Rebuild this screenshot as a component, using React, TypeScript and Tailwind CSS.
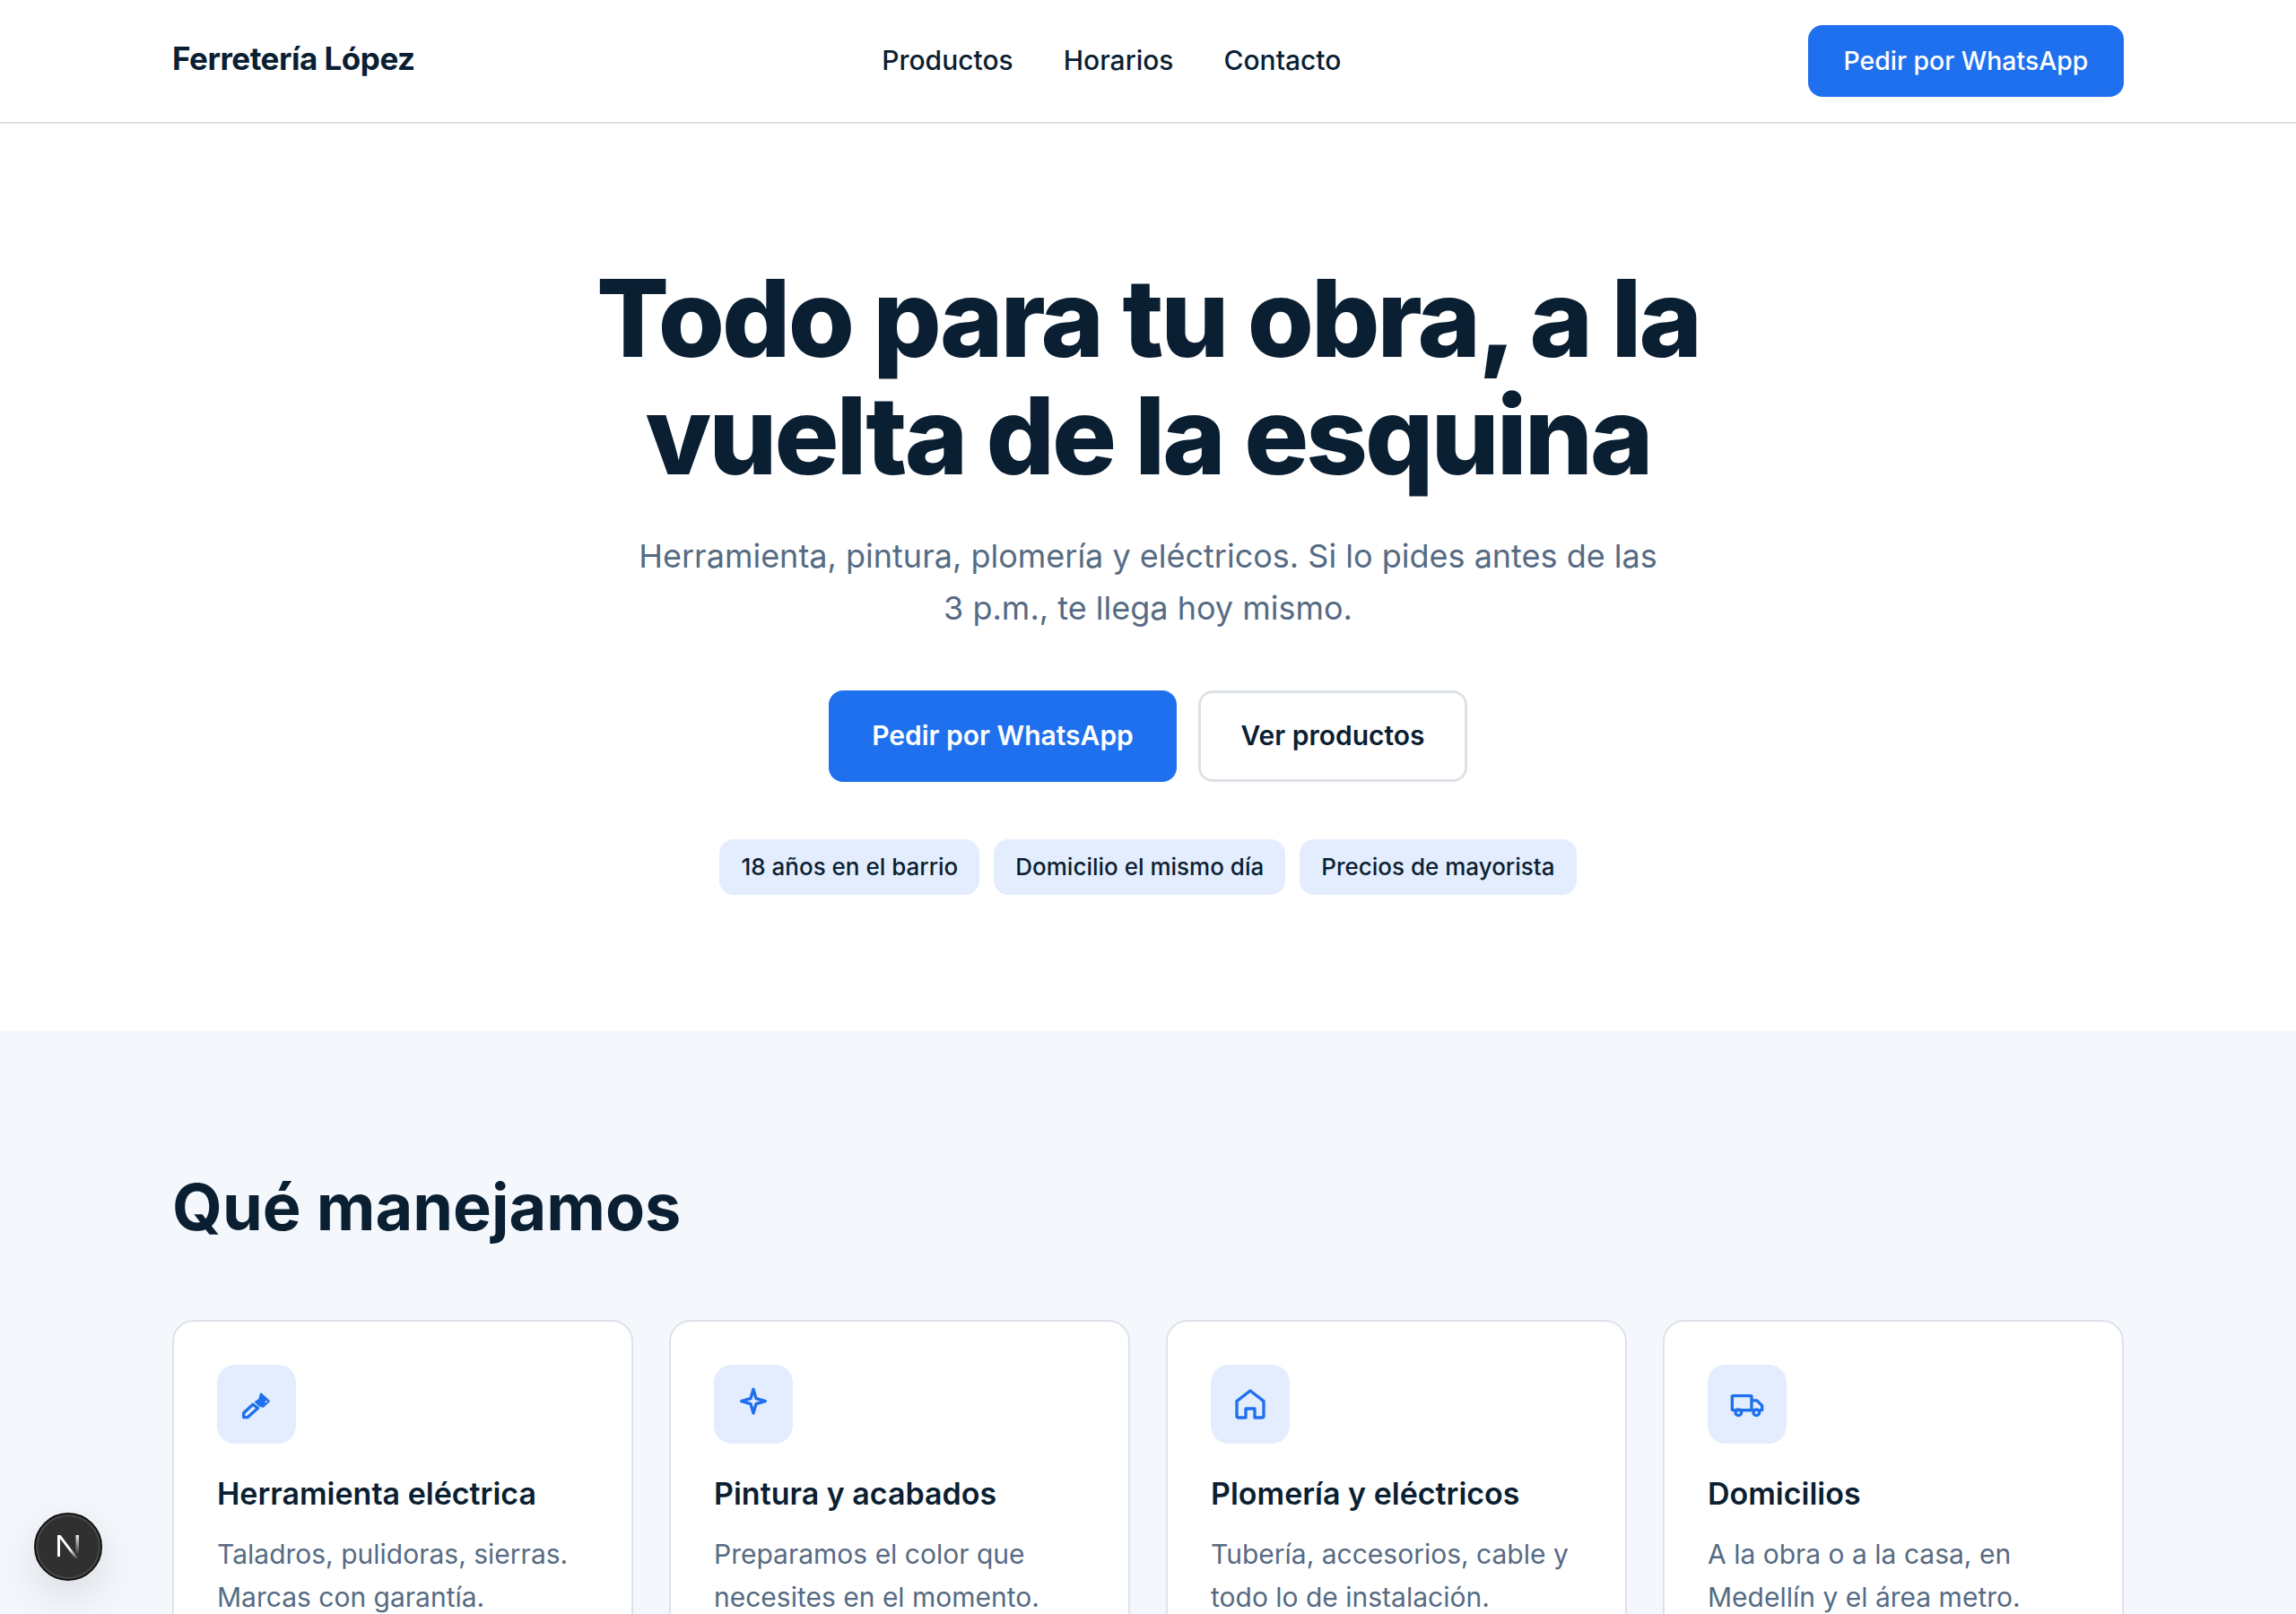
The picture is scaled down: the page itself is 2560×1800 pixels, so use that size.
import type { ReactNode } from 'react'

function Icon({ children }: { children: ReactNode }) {
  return (
    <svg viewBox="0 0 24 24" className="w-[40px] h-[40px] text-[#1f70ee]" fill="none" stroke="currentColor" strokeWidth={2} strokeLinecap="round" strokeLinejoin="round">
      {children}
    </svg>
  )
}

const cards = [
  {
    icon: (
      <Icon>
        <path d="M3.4 17.8l6.2-5.6 3.4 2.4-7 6.2H3.4z" />
        <path d="M11.5 10.5L14 9l1-3.8 5.2 4.8-3.8 3.6-2.4-.8z" fill="currentColor" strokeWidth={1.4} />
        <path d="M18 10.6l.8-.5" stroke="#e3edfd" strokeWidth={0.8} />
      </Icon>
    ),
    title: 'Herramienta eléctrica',
    text: ['Taladros, pulidoras, sierras.', 'Marcas con garantía.'],
  },
  {
    icon: (
      <Icon>
        <path d="M12 2l1.8 6.2L20 10l-6.2 1.8L12 18l-1.8-6.2L4 10l6.2-1.8z" />
      </Icon>
    ),
    title: 'Pintura y acabados',
    text: ['Preparamos el color que', 'necesites en el momento.'],
  },
  {
    icon: (
      <Icon>
        <path d="M3 10l9-7 9 7v10a1 1 0 0 1-1 1h-5v-6H9v6H4a1 1 0 0 1-1-1z" />
      </Icon>
    ),
    title: 'Plomería y eléctricos',
    text: ['Tubería, accesorios, cable y', 'todo lo de instalación.'],
  },
  {
    icon: (
      <Icon>
        <rect x="2" y="6.4" width="13" height="9.6" rx="0.5" />
        <path d="M15 9.5h3.5L22 13v3h-1.8" />
        <path d="M8.2 16h7.8" />
        <circle cx="6.2" cy="17.6" r="2" />
        <circle cx="18.2" cy="17.6" r="2" />
      </Icon>
    ),
    title: 'Domicilios',
    text: ['A la obra o a la casa, en', 'Medellín y el área metro.'],
  },
]

export default function App() {
  return (
    <div className="h-[1800px] overflow-hidden bg-white font-['Inter',sans-serif] relative">
      <header className="h-[138px] border-b-2 border-[#dde2e7] flex items-center justify-between px-[192px]">
        <div className="text-[35px] font-bold text-[#0b1f33] tracking-[-0.5px] pb-[6px]">Ferretería López</div>
        <nav className="flex gap-[56px] text-[30px] font-medium text-[#0b1f33] pb-[2px]">
          <span>Productos</span>
          <span>Horarios</span>
          <span>Contacto</span>
        </nav>
        <button className="h-[80px] w-[352px] pt-[1px] rounded-[16px] bg-[#1f70ee] text-white text-[28.4px] font-medium">Pedir por WhatsApp</button>
      </header>

      <section className="h-[1012px] flex flex-col items-center pt-[151px]">
        <h1 className="text-[120px] leading-[131px] font-extrabold text-[#0b1f33] text-center tracking-[-3px]">
          Todo para tu obra, a la<br />vuelta de la esquina
        </h1>
        <p className="mt-[40px] text-[36px] leading-[58px] text-[#566b83] text-center">
          Herramienta, pintura, plomería y eléctricos. Si lo pides antes de las<br />3 p.m., te llega hoy mismo.
        </p>
        <div className="mt-[63px] flex gap-[24px]">
          <button className="h-[102px] w-[388px] pb-[2px] rounded-[16px] bg-[#1f70ee] text-white text-[30px] font-semibold">Pedir por WhatsApp</button>
          <button className="h-[102px] w-[300px] pb-[2px] rounded-[16px] border-[3px] border-[#dde2e7] bg-white text-[#0b1f33] text-[30px] font-semibold">Ver productos</button>
        </div>
        <div className="mt-[64px] flex gap-[16px]">
          {['18 años en el barrio', 'Domicilio el mismo día', 'Precios de mayorista'].map((t) => (
            <span key={t} className="h-[62px] px-[24px] pb-[2px] rounded-[16px] bg-[#e3edfd] text-[#0b1f33] text-[26px] font-medium flex items-center">{t}</span>
          ))}
        </div>
      </section>

      <section className="bg-[#f4f7fb] px-[192px] pt-[156px] h-[650px]">
        <h2 className="text-[72px] leading-[80px] font-bold text-[#0b1f33]">Qué manejamos</h2>
        <div className="mt-[86px] grid grid-cols-4 gap-[40px]">
          {cards.map((c) => (
            <div key={c.title} className="h-[400px] bg-white border-2 border-[#dde3e9] rounded-[24px] p-[48px]">
              <div className="w-[88px] h-[88px] rounded-[20px] bg-[#e3edfd] flex items-center justify-center">
                {c.icon}
              </div>
              <h3 className="mt-[32px] text-[34px] leading-[48px] font-semibold text-[#0b1f33]">{c.title}</h3>
              <p className="mt-[19px] text-[30px] leading-[48px] text-[#566b83]">{c.text[0]}<br />{c.text[1]}</p>
            </div>
          ))}
        </div>
      </section>

      <div className="absolute left-[38px] top-[1687px] w-[76px] h-[76px] rounded-full bg-[#303030] border-[2px] border-[#111] ring-[2px] ring-inset ring-[#4a4a4a] flex items-center justify-center shadow-[0_16px_48px_rgba(0,0,0,0.12)]">
        <svg viewBox="0 0 24 27" className="w-[24px] h-[27px]" fill="none">
          <defs>
            <linearGradient id="nDiag" x1="0" y1="0" x2="0" y2="1">
              <stop offset="0.6" stopColor="#fff" />
              <stop offset="1" stopColor="#fff" stopOpacity="0" />
            </linearGradient>
            <linearGradient id="nStem" x1="0" y1="0" x2="0" y2="1">
              <stop offset="0" stopColor="#fff" stopOpacity="0.9" />
              <stop offset="1" stopColor="#fff" stopOpacity="0" />
            </linearGradient>
          </defs>
          <path d="M0 0h3v24H0z" fill="#fff" />
          <path d="M0 0h3.6L24 27h-3.6z" fill="url(#nDiag)" />
          <path d="M20.5 0h3.5v22h-3.5z" fill="url(#nStem)" />
        </svg>
      </div>
    </div>
  )
}
